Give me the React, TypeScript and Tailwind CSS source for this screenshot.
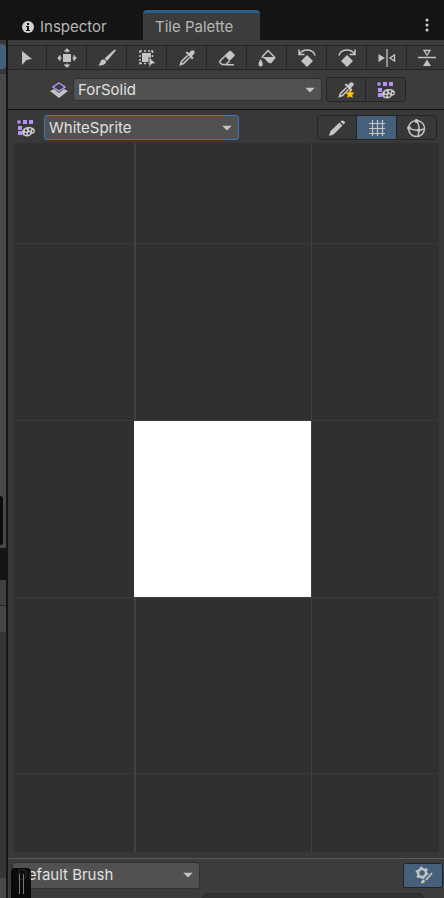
import React from 'react';
import type { ReactNode } from 'react';

const G = '#c4c4c4';
const V = '#b292f5';

function Icon({ children }: { children: ReactNode }) {
  return (
    <svg width="20" height="20" viewBox="0 0 20 20" fill="none" stroke={G} strokeWidth="1.5" className="shrink-0" aria-hidden="true">
      {children}
    </svg>
  );
}

const dropper = (
  <>
    <path d="M10.500 7.500 4.500 13.500 3.500 16.500 6.500 15.500 12.500 9.500" strokeWidth="1.600" />
    <path d="M8.500 4.500 10 3.500 12 5 14 2.800Q16 1.500 17.300 3 18.500 4.500 17 6L15 8 16.500 10 15 11.500Z" fill={G} stroke="none" />
  </>
);

const palette = (
  <>
    <path d="m1 3 3-1 1 3-3 1ZM7 2h4v4H7zM13 2h4v4h-4zM2 8h4v4H2zM2 13h4v4H2z" fill={V} stroke="none" />
    <path d="M6 14.500C6 11 9 9 13 9s6 2 6 4-1.500 2.500-2.500 2.500S15 18.500 11.500 18.500 6 17 6 14.500Z" fill={G} stroke="none" />
    <path d="M9 11.500h2v2H9zM13 10.500h2v2h-2zM8.500 15h2v1.500h-2zM12 14.500h2v2h-2zM16 12.500h1.500v1.500H16z" fill="#383838" stroke="none" />
  </>
);

const tools: { name: string; icon: ReactNode }[] = [
  { name: 'Select', icon: <path d="M5 3 15 11 9.500 12 5 17Z" fill={G} stroke="none" /> },
  {
    name: 'Move',
    icon: (
      <>
        <path d="M6 6h8v8H6z" fill={G} stroke="none" />
        <path d="M10 4.500V1.500M10 15.500v3M4.500 10h-3M15.500 10h3M7.500 3.500 10 1.300l2.500 2.200M7.500 16.500l2.500 2.200 2.500-2.200M3.500 7.500 1.300 10l2.200 2.500M16.500 7.500l2.200 2.500-2.200 2.500" />
      </>
    ),
  },
  {
    name: 'Paint brush',
    icon: (
      <>
        <path d="M7.500 10.500 17.500 1.500Q19.500 1 18.500 3L10 13Z" fill={G} stroke="none" />
        <path d="M6.500 11.500Q9.500 12 9 14.500 7.500 18 1 17.500 3 16 3.500 13.500 4.500 11 6.500 11.500Z" fill={G} stroke="none" />
      </>
    ),
  },
  {
    name: 'Box select',
    icon: (
      <>
        <path d="M5 5h9v9H5z" fill={G} stroke="none" />
        <path d="M3 5V3h2M7 3h2M11 3h2M14 3h1.500v2M15.500 7v2M3 7v2M3 11v2M3 14v1.500h2M7 15.500h2M11 15.500h1" />
        <path d="m12 9 7 6.500-4 .5-3 3.500Z" fill={G} stroke="#383838" strokeWidth=".8" />
      </>
    ),
  },
  { name: 'Pick tile', icon: dropper },
  {
    name: 'Erase',
    icon: (
      <>
        <path d="M7.500 7.500 12.500 2.800Q13.500 2.500 14.500 3.500L17.500 6.500Q18 7.500 17.500 8L12.500 13Z" fill={G} stroke="none" />
        <path d="M8 8 3 13q-.5 1 0 1.500l2 2h4L12.500 13M9 16.800h8" />
      </>
    ),
  },
  {
    name: 'Fill',
    icon: (
      <>
        <path d="m5 9 6-6.500L17.500 9" />
        <path d="M4 9h14.500v1L14 15.500 11 14.500 8 11Z" fill={G} stroke="none" />
        <path d="M3.500 11Q6.500 15 5.500 17.500 4 19 2 18 .5 16 3.500 11Z" fill={G} stroke="none" />
      </>
    ),
  },
  {
    name: 'Rotate left',
    icon: (
      <>
        <path d="m10 7 6 6-6 6-6-6Z" fill={G} stroke="none" />
        <path d="M2 1.500V6.500h5.500M2.500 6C6 .5 16 .5 18 7.500" />
      </>
    ),
  },
  {
    name: 'Rotate right',
    icon: (
      <>
        <path d="m10 7 6 6-6 6-6-6Z" fill={G} stroke="none" />
        <path d="M18 1.500V6.500h-5.500M17.500 6C14 .5 4 .5 2 7.500" />
      </>
    ),
  },
  {
    name: 'Flip horizontally',
    icon: (
      <>
        <path d="m1.500 6 6.500 4-6.500 4Z" fill={G} stroke="none" />
        <path d="M10 1v18M17.500 7v6l-4.500-3Z" strokeWidth="1.300" />
      </>
    ),
  },
  {
    name: 'Flip vertically',
    icon: (
      <>
        <path d="m6 18 4-6.500 4 6.500Z" fill={G} stroke="none" />
        <path d="M1 9.500h18M7 2.500h6L10 7Z" strokeWidth="1.300" />
      </>
    ),
  },
];

function Dropdown({ label, value, className }: { label: string; value: string; className: string }) {
  return (
    <div className={`relative rounded-[3px] border bg-[#515151] ${className}`}>
      <select aria-label={label} className="block h-full w-full appearance-none bg-transparent pr-6 pl-1 text-[15px] leading-5 text-[#e0e0e0] outline-none">
        <option>{value}</option>
      </select>
      <svg width="10" height="5" viewBox="0 0 10 5" className="pointer-events-none absolute top-1/2 right-1.5 -translate-y-1/2" aria-hidden="true">
        <path d="M0 0h10L5 5Z" fill={G} />
      </svg>
    </div>
  );
}

function ToolButton({ name, active, children }: { name: string; active?: boolean; children: ReactNode }) {
  return (
    <button
      type="button"
      aria-label={name}
      className={`flex w-10 min-w-0 items-center justify-center border-r border-[#242424] last:border-r-0 ${active ? 'bg-[#46607c]' : 'bg-[#383838]'}`}
    >
      <Icon>{children}</Icon>
    </button>
  );
}

function NeighbourPanel() {
  return (
    <div className="flex w-2 shrink-0 flex-col border-r-2 border-[#151515] bg-[#383838]" aria-hidden="true">
      <div className="h-1" />
      <div className="h-[25px] rounded-r-sm bg-[#46607c]" />
      <div className="h-1" />
      <div className="h-[423px] border-t border-[#303030] bg-[#484848]" />
      <div className="h-[52px] bg-[#484848]">
        <div className="h-[49px] w-[3px] rounded-r-sm bg-[#0c0c0c]" />
      </div>
      <div className="h-8 bg-[#141414]" />
      <div className="h-[26px] border-b border-[#242424] bg-[#414141]" />
      <div className="h-[26px] bg-[#454545]" />
      <div className="flex-1 bg-[#353535]" />
      <div className="h-5 bg-[#484848]" />
    </div>
  );
}

const cells = Array.from({ length: 15 }, (_, i) => i);

export default function App() {
  return (
    <div className="flex h-screen flex-col overflow-hidden bg-[#141414] font-[Inter,sans-serif] text-[15px] leading-5 text-[#b8b8b8]">
      <header className="flex h-10 shrink-0 items-end">
        <div role="tablist" className="flex flex-1 items-end">
          <button type="button" role="tab" aria-selected="false" className="flex h-[30px] w-[143px] items-center gap-1.5 border-t-3 border-transparent pl-[22px]">
            <svg width="12" height="12" viewBox="0 0 12 12" aria-hidden="true">
              <circle cx="6" cy="6" r="6" fill="#d0d0d0" />
              <path d="M5 2h2v2H5zM4 5h3v4h1v1H4V9h1V6H4z" fill="#141414" />
            </svg>
            Inspector
          </button>
          <button type="button" role="tab" aria-selected="true" className="h-[30px] w-[117px] rounded-t border-t-3 border-[#2c5d87] bg-[#3c3c3c] px-3 text-left">
            Tile Palette
          </button>
        </div>
        <button type="button" aria-label="More options" className="flex h-[30px] w-[34px] items-center justify-center">
          <svg width="4" height="14" viewBox="0 0 4 14" fill="#d0d0d0" aria-hidden="true">
            <circle cx="2" cy="2" r="1.500" />
            <circle cx="2" cy="7" r="1.500" />
            <circle cx="2" cy="12" r="1.500" />
          </svg>
        </button>
      </header>

      <div className="flex min-h-0 flex-1">
        <NeighbourPanel />
        <main className="flex min-w-0 flex-1 flex-col overflow-hidden bg-[#383838]">
          <div className="h-[70px] shrink-0 border-b border-[#101010] bg-[#3c3c3c]">
            <div className="mt-[5px] -mr-1 -ml-px flex h-[25px] border-y border-[#242424]">
              {tools.map((t) => (
                <div key={t.name} className="flex shrink-0 border-r border-[#242424]">
                  <button type="button" aria-label={t.name} className="flex w-[39px] items-center justify-center bg-[#383838]">
                    <Icon>{t.icon}</Icon>
                  </button>
                </div>
              ))}
            </div>
            <div className="mt-[7px] flex items-center pr-[38px] pl-[41px]">
              <Icon>
                <path d="m1 11 4-2 5 4 5-4 4 2-9 7Z" fill={G} stroke="none" />
                <path d="m10 3 6 4-6 4-6-4Z" stroke={V} />
              </Icon>
              <Dropdown label="Active tilemap" value="ForSolid" className="ml-1 h-[23px] flex-1 border-[#303030]" />
              <div className="ml-1 flex h-[25px] w-20 overflow-hidden rounded-[3px] border border-[#242424]">
                <ToolButton name="Pick active tilemap">
                  {dropper}
                  <path d="m14 9.500 1.300 2.800 3.200.4-2.300 2.200.6 3.200L14 16.500l-2.800 1.600.6-3.200-2.300-2.200 3.200-.4Z" fill="#ffc107" stroke="none" />
                </ToolButton>
                <ToolButton name="Open palette">{palette}</ToolButton>
              </div>
            </div>
          </div>

          <div className="flex h-[33px] shrink-0 items-center pt-1.5 pr-[7px] pb-1 pl-2">
            <Icon>{palette}</Icon>
            <Dropdown label="Tile palette" value="WhiteSprite" className="ml-2 h-[25px] w-[195px] border-[#3a79bb]" />
            <div className="ml-auto flex h-[25px] w-30 overflow-hidden rounded-[3px] border border-[#242424]">
              <ToolButton name="Edit palette">
                <path d="m2 18 1.500-5 9-8.500 3 3L6.500 16.500ZM13.500 3.500 15 2.500Q16 2 17.500 3.500T17.500 5.500L16.500 6.500Z" fill={G} stroke="none" />
              </ToolButton>
              <ToolButton name="Toggle grid" active>
                <path d="M5.500 2v16M10.500 2v16M15.500 2v16M2 5.500h16M2 10.500h16M2 15.500h16" strokeWidth="1.200" />
              </ToolButton>
              <ToolButton name="Toggle gizmos">
                <circle cx="10.500" cy="10.500" r="8" />
                <path d="M10.500 3Q15 8 12 18M3 10Q9 14 18 11" />
                <circle cx="10.500" cy="3" r="2" fill={G} stroke="none" />
                <circle cx="3" cy="10" r="2" fill={G} stroke="none" />
                <circle cx="12.800" cy="12.300" r="1.800" fill={G} stroke="none" />
              </ToolButton>
            </div>
          </div>

          <section aria-label="Tile canvas" className="mr-[5px] mb-1.5 ml-1.5 grid min-h-0 flex-1 grid-cols-[122px_176px_1fr] grid-rows-[101px_177px_177px_176px_1fr] bg-[#303030]">
            {cells.map((i) => (
              <div
                key={i}
                className={`${i % 3 === 0 ? 'border-r-2 border-r-[#424242]' : i % 3 === 1 ? 'border-r border-r-[#424242]' : ''} ${i < 12 ? 'border-b border-b-[#3a3a3a]' : ''} ${i === 7 ? '-ml-0.5 bg-white bg-clip-border' : ''}`}
              />
            ))}
          </section>

          <footer className="relative h-10 shrink-0 overflow-hidden border-t border-[#585858] bg-[#3c3c3c]">
            <div className="flex h-8 items-center justify-between pr-px pl-1">
              <Dropdown label="Brush" value="Default Brush" className="h-[27px] w-[188px] border-[#303030]" />
              <div className="flex h-[25px] overflow-hidden rounded-[3px] border border-[#242424]">
                <button type="button" aria-label="Brush settings" className="flex w-[38px] items-center justify-center bg-[#46607c]">
                  <Icon>
                    <circle cx="9" cy="8" r="4" strokeWidth="2.500" />
                    <circle cx="9" cy="8" r="5.800" strokeWidth="1.500" strokeDasharray="2.600 3.480" />
                    <path d="m12 16 8-9" stroke="#46607c" strokeWidth="4" />
                    <path d="m13 15 6-7" strokeWidth="1.800" />
                    <path d="M8 18.500q0-4 3-3.500 2 1 0 3Z" fill={G} stroke="none" />
                  </Icon>
                </button>
              </div>
            </div>
            <div className="mt-0.5 mr-5 ml-[194px] h-4 rounded-t-md border border-[#282828] bg-[#323232]" />
            <div className="absolute top-[9px] left-[3px] flex h-8 w-5 justify-center gap-[3px] rounded-t bg-black/85 pt-1.5">
              <span className="h-5 w-px bg-[#777777]" />
              <span className="h-5 w-px bg-[#777777]" />
            </div>
          </footer>
        </main>
      </div>
    </div>
  );
}
